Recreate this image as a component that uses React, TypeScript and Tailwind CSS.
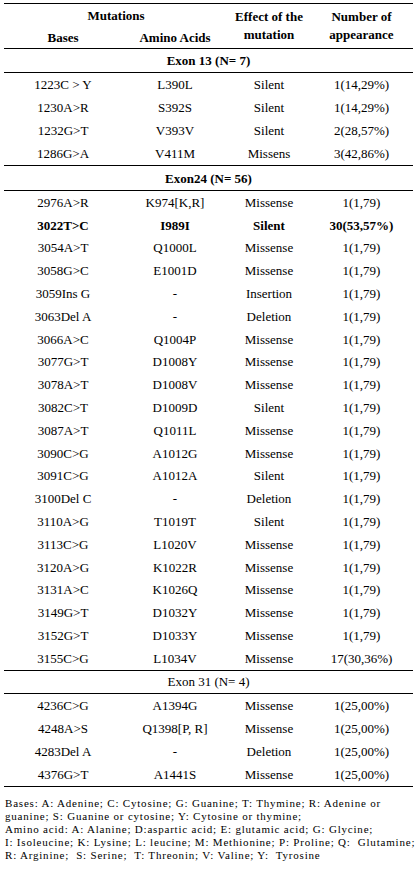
import React from 'react';

type Row = { base: string; amino: string; effect: string; count: string; bold?: boolean };

const exon13: Row[] = [
  { base: '1223C > Y', amino: 'L390L', effect: 'Silent', count: '1(14,29%)' },
  { base: '1230A>R', amino: 'S392S', effect: 'Silent', count: '1(14,29%)' },
  { base: '1232G>T', amino: 'V393V', effect: 'Silent', count: '2(28,57%)' },
  { base: '1286G>A', amino: 'V411M', effect: 'Missens', count: '3(42,86%)' },
];

const exon24: Row[] = [
  { base: '2976A>R', amino: 'K974[K,R]', effect: 'Missense', count: '1(1,79)' },
  { base: '3022T>C', amino: 'I989I', effect: 'Silent', count: '30(53,57%)', bold: true },
  { base: '3054A>T', amino: 'Q1000L', effect: 'Missense', count: '1(1,79)' },
  { base: '3058G>C', amino: 'E1001D', effect: 'Missense', count: '1(1,79)' },
  { base: '3059Ins G', amino: '-', effect: 'Insertion', count: '1(1,79)' },
  { base: '3063Del A', amino: '-', effect: 'Deletion', count: '1(1,79)' },
  { base: '3066A>C', amino: 'Q1004P', effect: 'Missense', count: '1(1,79)' },
  { base: '3077G>T', amino: 'D1008Y', effect: 'Missense', count: '1(1,79)' },
  { base: '3078A>T', amino: 'D1008V', effect: 'Missense', count: '1(1,79)' },
  { base: '3082C>T', amino: 'D1009D', effect: 'Silent', count: '1(1,79)' },
  { base: '3087A>T', amino: 'Q1011L', effect: 'Missense', count: '1(1,79)' },
  { base: '3090C>G', amino: 'A1012G', effect: 'Missense', count: '1(1,79)' },
  { base: '3091C>G', amino: 'A1012A', effect: 'Silent', count: '1(1,79)' },
  { base: '3100Del C', amino: '-', effect: 'Deletion', count: '1(1,79)' },
  { base: '3110A>G', amino: 'T1019T', effect: 'Silent', count: '1(1,79)' },
  { base: '3113C>G', amino: 'L1020V', effect: 'Missense', count: '1(1,79)' },
  { base: '3120A>G', amino: 'K1022R', effect: 'Missense', count: '1(1,79)' },
  { base: '3131A>C', amino: 'K1026Q', effect: 'Missense', count: '1(1,79)' },
  { base: '3149G>T', amino: 'D1032Y', effect: 'Missense', count: '1(1,79)' },
  { base: '3152G>T', amino: 'D1033Y', effect: 'Missense', count: '1(1,79)' },
  { base: '3155C>G', amino: 'L1034V', effect: 'Missense', count: '17(30,36%)' },
];

const exon31: Row[] = [
  { base: '4236C>G', amino: 'A1394G', effect: 'Missense', count: '1(25,00%)' },
  { base: '4248A>S', amino: 'Q1398[P, R]', effect: 'Missense', count: '1(25,00%)' },
  { base: '4283Del A', amino: '-', effect: 'Deletion', count: '1(25,00%)' },
  { base: '4376G>T', amino: 'A1441S', effect: 'Missense', count: '1(25,00%)' },
];

const cols = 'grid grid-cols-[118px_106px_82px_103px] items-center text-center';

const DataRows = ({ rows, tight }: { rows: Row[]; tight?: boolean }) => (
  <div className="flex flex-col">
    {rows.map((r) => (
      <div
        key={r.base}
        className={`${cols} shrink-0 ${tight ? 'h-[22.8px]' : 'h-[23px]'} ${r.bold ? 'font-bold' : ''}`}
      >
        <div>{r.base}</div>
        <div>{r.amino}</div>
        <div>{r.effect}</div>
        <div>{r.count}</div>
      </div>
    ))}
  </div>
);

const Line = () => <div className="h-px shrink-0 bg-black" />;

export default function App() {
  return (
    <div className="bg-white w-[416px] min-h-[876px] text-black font-['Liberation_Serif','Times_New_Roman',serif]">
      <div className="ml-[4px] pt-[3px] w-[409px] text-[13px] leading-none flex flex-col">
        <Line />
        {/* header */}
        <div className="grid grid-cols-[118px_106px_82px_103px] grid-rows-[22px_22px] items-center text-center font-bold">
          <div className="col-span-2">Mutations</div>
          <div className="row-span-2 leading-[18px]">
            Effect of the
            <br />
            mutation
          </div>
          <div className="row-span-2 leading-[18px]">
            Number of
            <br />
            appearance
          </div>
          <div>Bases</div>
          <div>Amino Acids</div>
        </div>
        <Line />
        <div className="h-[23px] flex items-center justify-center font-bold">Exon 13 (N= 7)</div>
        <Line />
        <DataRows rows={exon13} />
        <Line />
        <div className="h-[24px] flex items-center justify-center font-bold">Exon24 (N= 56)</div>
        <Line />
        <DataRows rows={exon24} tight />
        <Line />
        <div className="h-[22px] flex items-center justify-center">Exon 31 (N= 4)</div>
        <Line />
        <DataRows rows={exon31} />
        <Line />
      </div>
      {/* legend */}
      <div className="ml-[5px] mt-[10px] text-[11px] leading-[13px] tracking-[0.8px] whitespace-nowrap">
        <div>Bases: A: Adenine; C: Cytosine; G: Guanine; T: Thymine; R: Adenine or</div>
        <div>guanine; S: Guanine or cytosine; Y: Cytosine or thymine;</div>
        <div>Amino acid: A: Alanine; D:aspartic acid; E: glutamic acid; G: Glycine;</div>
        <div>I: Isoleucine; K: Lysine; L: leucine; M: Methionine; P: Proline; Q:&nbsp; Glutamine;</div>
        <div>R: Arginine;&nbsp; S: Serine;&nbsp; T: Threonin; V: Valine; Y:&nbsp; Tyrosine</div>
      </div>
    </div>
  );
}
